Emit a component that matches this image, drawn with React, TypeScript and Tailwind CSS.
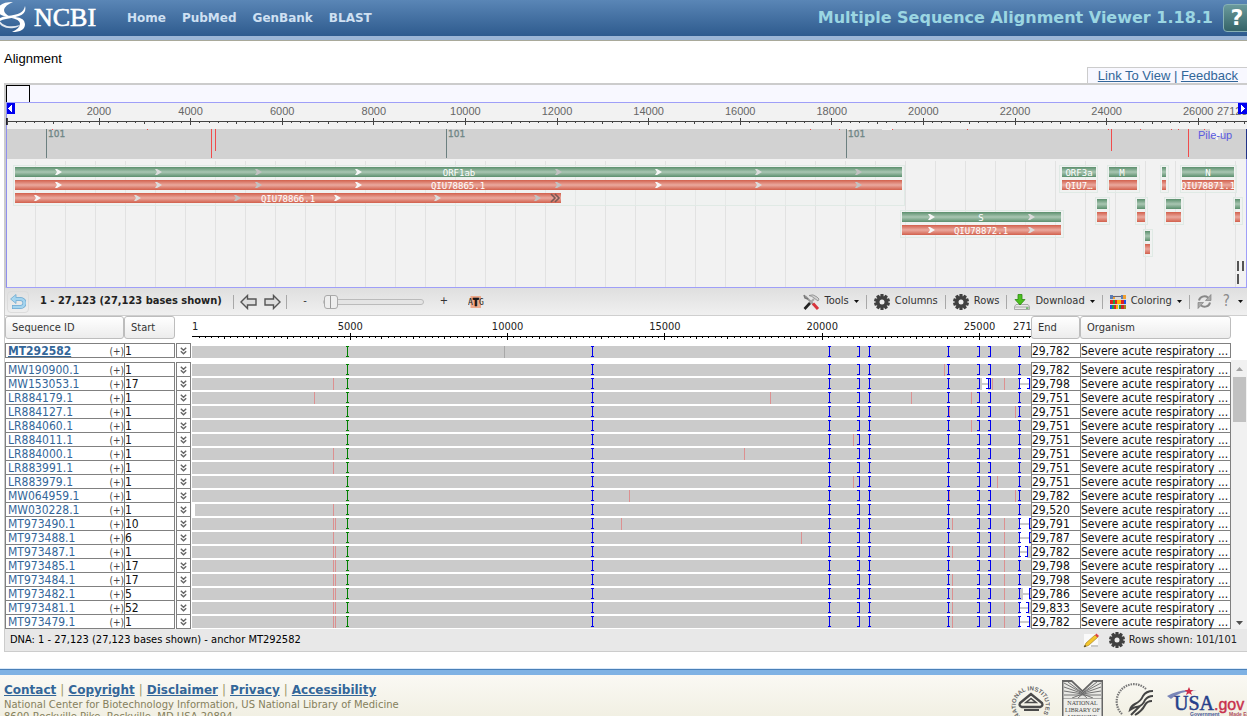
import React from "react";

const CONDENSED = "font-['DejaVu_Sans_Condensed','DejaVu_Sans',sans-serif]";

/* ---------- overview panel ---------- */

const OV_LEFT = 6;
const OV_WIDTH = 1241;
const ov = (x: number) => `${((x - OV_LEFT) / OV_WIDTH) * 100}%`;
const ovw = (w: number) => `${(w / OV_WIDTH) * 100}%`;

type Gene = { x1: number; x2: number; y: number; kind: "gene" | "protein"; label?: string; at?: number; arrows?: number[] };

const genes: Gene[] = [
  { x1: 15, x2: 902, y: 82, kind: "gene", label: "ORF1ab", at: 459, arrows: [55, 155, 255, 355, -1, 555, 655, 755, 855] },
  { x1: 15, x2: 902, y: 95, kind: "protein", label: "QIU78865.1", at: 458, arrows: [55, 155, 255, 355, -1, 555, 655, 755, 855] },
  { x1: 15, x2: 561, y: 108, kind: "protein", label: "QIU78866.1", at: 288, arrows: [34, 134, 234, 334, 434, 534] },
  { x1: 902, x2: 1061, y: 127, kind: "gene", label: "S", at: 981, arrows: [928, 1028] },
  { x1: 902, x2: 1061, y: 140, kind: "protein", label: "QIU78872.1", at: 981, arrows: [928, 1028] },
  { x1: 1062, x2: 1096, y: 82, kind: "gene", label: "ORF3a", at: 1079 },
  { x1: 1062, x2: 1096, y: 95, kind: "protein", label: "QIU7…", at: 1079 },
  { x1: 1109, x2: 1137, y: 82, kind: "gene", label: "M", at: 1122 },
  { x1: 1109, x2: 1137, y: 95, kind: "protein" },
  { x1: 1162, x2: 1166, y: 82, kind: "gene" },
  { x1: 1162, x2: 1166, y: 95, kind: "protein" },
  { x1: 1182, x2: 1234, y: 82, kind: "gene", label: "N", at: 1208 },
  { x1: 1182, x2: 1234, y: 95, kind: "protein", label: "QIU78871.1", at: 1208 },
  { x1: 1097, x2: 1107, y: 114, kind: "gene" },
  { x1: 1097, x2: 1107, y: 127, kind: "protein" },
  { x1: 1137, x2: 1145, y: 114, kind: "gene" },
  { x1: 1137, x2: 1145, y: 127, kind: "protein" },
  { x1: 1166, x2: 1181, y: 114, kind: "gene" },
  { x1: 1166, x2: 1181, y: 127, kind: "protein" },
  { x1: 1235, x2: 1240, y: 114, kind: "gene" },
  { x1: 1235, x2: 1240, y: 127, kind: "protein" },
  { x1: 1145, x2: 1150, y: 146, kind: "gene" },
  { x1: 1145, x2: 1150, y: 159, kind: "protein" },
];

const groupBoxes = [
  [13, 904, 80, 40], [901, 1063, 125, 27], [1060, 1098, 80, 27], [1107, 1139, 80, 27], [1160, 1168, 80, 27],
  [1180, 1236, 80, 27], [1095, 1109, 112, 27], [1135, 1147, 112, 27], [1164, 1183, 112, 27], [1233, 1242, 112, 27], [1143, 1152, 144, 27],
];

const arrowShades = ["#f6f6f6", "#dcdcdc", "#c2c2c2"];

function Overview() {
  const ticks = Array.from({ length: 136 }, (_, i) => i);
  const grid = Array.from({ length: 41 }, (_, i) => 35 + i * 30);
  return (
    <div className="ml-1 border-t-2 border-l-2 border-[#cccccc]">
      <svg className="block h-[203px] w-full overflow-hidden bg-[#f2f2f2]" role="img" aria-label="Alignment overview" shapeRendering="crispEdges">
        <defs>
          <linearGradient id="gene" x1="0" y1="0" x2="0" y2="1">
            <stop offset="0" stopColor="#5b8f6d" />
            <stop offset=".5" stopColor="#a9c6b2" />
            <stop offset="1" stopColor="#5b8f6d" />
          </linearGradient>
          <linearGradient id="protein" x1="0" y1="0" x2="0" y2="1">
            <stop offset="0" stopColor="#d2604c" />
            <stop offset=".5" stopColor="#eaa99e" />
            <stop offset="1" stopColor="#d2604c" />
          </linearGradient>
        </defs>

        <rect width="100%" height="17" fill="#f8f8ff" />
        <path d="M.5 17V.5h23V17" fill="none" stroke="#000" />
        <rect y="17" width="100%" height="1" fill="#9f9ff8" />

        {/* ruler */}
        <rect y="36" width="100%" height="1" fill="#444" />
        {ticks.map((i) => (
          <rect key={i} x={ov(7 + i * 9.16)} y={i % 10 === 0 ? 33 : 36} width="1" height={i % 10 === 0 ? 7 : i % 5 === 0 ? 3 : 2} fill="#444" />
        ))}
        <g fill="#666" fontSize="11" className="font-['Liberation_Sans',sans-serif]">
          {Array.from({ length: 13 }, (_, i) => (
            <text key={i} x={ov(99 + i * 91.6)} y="30" textAnchor="middle">{(i + 1) * 2000}</text>
          ))}
          <text x={ov(1217)} y="30">27123</text>
        </g>
        <rect y="18" width="9" height="11" fill="#0000f0" />
        <path d="M6 20v7L2 23.5z" fill="#fff" />
        <rect x={ov(1238)} y="18" width="9" height="11" fill="#0000f0" />
        <svg x={ov(1241)} y="20" overflow="visible"><path d="M0 0v7l4-3.5z" fill="#fff" /></svg>

        {/* pile-up */}
        <rect y="44" width="100%" height="30" fill="#d2d2d2" />
        {[850, 885, 1212].map((x, i) => (
          <svg key={x} x={ov(x)} y="44" overflow="visible"><path d={i === 2 ? "M-2 0H11v7H7l-2 5-4-5h-3z" : "M-3 0H7v1H-3z"} fill="#f2f2f2" /></svg>
        ))}
        {[46, 446, 846].map((x) => (
          <g key={x}>
            <rect x={ov(x)} y="44" width="1" height="29" fill="#6c8080" />
            <text x={ov(x + 2)} y="52" fontSize="9" fill="#708686" stroke="#708686" strokeWidth=".3" className="font-['DejaVu_Sans',sans-serif]">101</text>
          </g>
        ))}
        {[[211, 29], [215, 22], [1111, 22], [1188, 28]].map(([x, h]) => (
          <rect key={x} x={ov(x)} y="44" width="1" height={h} fill="#f04c4c" />
        ))}
        {[52, 147, 810, 839, 892, 967, 1108, 1140, 1171, 1178, 1204].map((x) => (
          <rect key={x} x={ov(x)} y="44" width="1" height="1" fill="#f04c4c" />
        ))}
        <text x={ov(1198)} y="54" fontSize="11" fill="#5a5ae0" className="font-['Liberation_Sans',sans-serif]">Pile-up</text>

        {/* gene track */}
        {grid.map((x) => <rect key={x} x={ov(x)} y="76" width="1" height="126" fill="#e2e2e2" />)}
        {groupBoxes.map(([a, b, y, h]) => (
          <rect key={`${a}-${y}`} x={ov(a)} y={y} width={ovw(b - a)} height={h} fill="#eef3f0" fillOpacity=".4" stroke="#e0eae5" />
        ))}
        {genes.map((g, i) => (
          <g key={i}>
            <rect x={ov(g.x1)} y={g.y} width={ovw(g.x2 - g.x1)} height="10" fill={g.kind === "gene" ? "url(#gene)" : "url(#protein)"} />
            {g.arrows?.map((x, k) => x > 0 && (
              <svg key={k} x={ov(x)} y={g.y + 2} overflow="visible" shapeRendering="auto">
                <path d="M0 0h2l5 3-5 3H0l2-3z" fill={arrowShades[k % 3]} />
              </svg>
            ))}
            {g.label && (
              <text x={ov(g.at!)} y={g.y + 9} fontSize="9" textAnchor="middle" fill="#fff" className="font-['DejaVu_Sans_Mono',monospace]">{g.label}</text>
            )}
          </g>
        ))}
        <svg x={ov(551)} y="109" overflow="visible" shapeRendering="auto">
          <path d="M0 0l4 4-4 4M4 0l4 4-4 4" fill="none" stroke="#7a5a55" strokeWidth="1.6" />
        </svg>
        {[[1237, 176], [1242, 176], [1237, 189]].map(([x, y]) => (
          <rect key={`${x}-${y}`} x={ov(x)} y={y} width="2" height="10" fill="#555" />
        ))}
        <rect y="17" width="1" height="186" fill="#8f8fee" />
        <rect y="33" width="1" height="7" fill="#223" />
        <rect x={ov(1246)} y="44" width="1" height="30" fill="#223388" />
        <rect x={ov(1246)} y="74" width="1" height="129" fill="#9f9ff8" />
        <rect y="202" width="100%" height="1" fill="#9f9ff8" />
      </svg>
    </div>
  );
}

/* ---------- toolbar ---------- */

const Gear = () => (
  <svg width="16" height="16" viewBox="0 0 16 16" aria-hidden="true">
    <g fill="#404040">
      {[0, 36, 72, 108, 144].map((a) => <rect key={a} x="6.4" y="0" width="3.2" height="16" rx=".6" transform={`rotate(${a} 8 8)`} />)}
      <circle cx="8" cy="8" r="6" />
    </g>
    <circle cx="8" cy="8" r="2.5" fill="#ececec" />
  </svg>
);

const Sep = () => <span className="h-3.5 w-px bg-[#a8a8a8]" />;
const Caret = () => <svg width="5" height="3" viewBox="0 0 5 3" aria-hidden="true"><path d="M0 0h5L2.5 3z" fill="#111" /></svg>;

function ArrowIcon({ flip }: { flip?: boolean }) {
  return (
    <svg width="17" height="16" viewBox="0 0 17 16" aria-hidden="true" className={flip ? "rotate-180" : ""}>
      <path d="M1 8l6.500-6.500V5H16v6H7.500v3.500z" fill="#ddd" stroke="#555" strokeWidth="1.400" />
    </svg>
  );
}

const toolBtn = "flex items-center gap-[5px]";

function Toolbar() {
  return (
    <div className={`flex h-7 items-center justify-between border-b border-[#cfcfcf] bg-gradient-to-b from-[#dfdfdf] to-[#f0f0f0] text-[11px] text-[#333] ${CONDENSED}`}>
      <div className="flex items-center">
        <button aria-label="Undo" className="ml-0.5 flex h-[22px] w-[22px] items-center justify-center rounded-sm border border-[#dcdcdc]">
          <svg width="16" height="16" viewBox="0 0 16 16" aria-hidden="true">
            <path d="M5 5h5.500a3.600 3.600 0 0 1 0 8H2" fill="none" stroke="#6fa9d0" strokeWidth="4" />
            <path d="M6 .5v9L.6 5z" fill="#a8d8f0" stroke="#6fa9d0" strokeWidth=".8" />
            <path d="M4 5h6.500a3.600 3.600 0 0 1 0 8H2.600" fill="none" stroke="#a4d4ee" strokeWidth="2.600" />
          </svg>
        </button>
        <span className="ml-[11px] w-[193px] font-bold whitespace-nowrap text-[#222]">1 - 27,123 (27,123 bases shown)</span>
        <Sep />
        <button aria-label="Pan left" className="ml-1.5"><ArrowIcon /></button>
        <button aria-label="Pan right" className="mr-[5px] ml-[7px]"><ArrowIcon flip /></button>
        <Sep />
        <button aria-label="Zoom out" className="ml-3 w-3">-</button>
        <input
          type="range"
          aria-label="Zoom level"
          defaultValue={0}
          className="mr-2 ml-3 h-4 w-[101px] appearance-none bg-transparent [&::-webkit-slider-runnable-track]:h-1.5 [&::-webkit-slider-runnable-track]:rounded-sm [&::-webkit-slider-runnable-track]:border [&::-webkit-slider-runnable-track]:border-[#bbb] [&::-webkit-slider-runnable-track]:bg-[#e4e4e4] [&::-webkit-slider-thumb]:-mt-[5px] [&::-webkit-slider-thumb]:h-3.5 [&::-webkit-slider-thumb]:w-3.5 [&::-webkit-slider-thumb]:appearance-none [&::-webkit-slider-thumb]:rounded-[3px] [&::-webkit-slider-thumb]:border [&::-webkit-slider-thumb]:border-[#aaa] [&::-webkit-slider-thumb]:bg-[linear-gradient(90deg,#eee_5px,#999_5px,#999_6px,#eee_6px)]"
        />
        <button aria-label="Zoom in" className="ml-1.5 w-3">+</button>
        <button aria-label="Zoom to sequence" className="ml-[18px]">
          <svg width="16" height="14" viewBox="0 0 16 14" aria-hidden="true">
            <rect x="2.500" y="1" width="10.500" height="12" fill="#eda98c" />
            <g className="font-['DejaVu_Sans_Mono',monospace]" fill="#222">
              <text x="0" y="10" fontSize="8">A</text>
              <text x="11" y="10" fontSize="8">G</text>
              <text x="4.500" y="11" fontSize="11" fontWeight="bold" stroke="#000" strokeWidth=".6">T</text>
            </g>
          </svg>
        </button>
      </div>
      <div className="flex items-center gap-[7px] whitespace-nowrap">
        <button className={toolBtn}>
          <svg width="17" height="16" viewBox="0 0 17 16" aria-hidden="true">
            <path d="M2 2l9 9" stroke="#999" strokeWidth="1.800" />
            <path d="M1 1l1 3 3 1" stroke="#777" fill="none" strokeWidth="1.500" />
            <path d="M10 9.500l5 5.500" stroke="#d8343c" strokeWidth="3" />
            <path d="M11 5L7 9" stroke="#aaa" strokeWidth="2" />
            <path d="M7 9l-5.500 6" stroke="#222" strokeWidth="2.600" />
            <path d="M6 1.500q4-2 8 1.500l2 2-1 2-4-3q-2-2-5-2.500z" fill="#d2d2d2" stroke="#888" strokeWidth=".8" />
          </svg>
          Tools <Caret />
        </button>
        <Sep />
        <button className={toolBtn}><Gear />Columns</button>
        <Sep />
        <button className={toolBtn}><Gear />Rows</button>
        <Sep />
        <button className={toolBtn}>
          <svg width="16" height="16" viewBox="0 0 16 16" aria-hidden="true">
            <path d="M2 10.500h12l1.500 2v3H.5v-3z" fill="#e8e8e8" stroke="#999" strokeWidth=".8" />
            <path d="M1 13h14" stroke="#aaa" />
            <rect x="12" y="13.500" width="2.500" height="1.200" fill="#4a4" />
            <path d="M4 .5h4v5h3L6 11 1 5.500h3z" fill="#4cc01e" stroke="#2c8a12" strokeWidth=".8" />
          </svg>
          Download <Caret />
        </button>
        <Sep />
        <button className={toolBtn}>
          <svg width="16" height="14" viewBox="0 0 16 14" shapeRendering="crispEdges" aria-hidden="true">
            <rect width="16" height="14" fill="#dcdcdc" />
            <path d="M0 0h3v4H0zM11 0h2v4h-2z" fill="#5c7cb4" />
            <path d="M3 1h8v1H3z" fill="#667" />
            <path d="M13 0h3v4h-3zM3 2h2v2H3z" fill="#f0a030" />
            <path d="M0 5h3v4H0zM5 5h2v4H5zM11 5h3v4h-3z" fill="#e02020" />
            <path d="M3 5h2v4H3zM9 10h2v4H9zM2 10h2v4H2z" fill="#20a040" />
            <path d="M7 5h4v4H7zM6 10h2v4H6z" fill="#ffb400" />
            <path d="M14 5h2v4h-2zM0 10h2v4H0z" fill="#2050e0" />
            <path d="M4 10h2v4H4zM11 10h3v4h-3z" fill="#d02828" />
            <path d="M14 10h2v4h-2z" fill="#a08a20" />
          </svg>
          Coloring <Caret />
        </button>
        <Sep />
        <button aria-label="Refresh">
          <svg width="15" height="15" viewBox="0 0 15 15" aria-hidden="true">
            <path d="M2 6.500A5.500 5 0 0 1 11 3.500M13 8.500A5.500 5 0 0 1 4 11.500" fill="none" stroke="#888" strokeWidth="2" />
            <path d="M14 .5v6H8.500zM1 14.500v-6h5.500z" fill="#aaa" stroke="#777" strokeWidth=".6" />
          </svg>
        </button>
        <button className="mr-1 flex items-center gap-2 text-[15px] leading-none text-[#8a8a8a]" aria-label="Help menu">
          <span className="ml-1">?</span> <Caret />
        </button>
      </div>
    </div>
  );
}

/* ---------- alignment table ---------- */

const AL_LEFT = 192;
const AL_WIDTH = 839;
const al = (x: number) => `${((x - AL_LEFT) / AL_WIDTH) * 100}%`;
const alw = (w: number) => `${(w / AL_WIDTH) * 100}%`;

type Gap = { from: number; to: number; close: "[" | "]" };
type Row = { id: string; start: number; end: string; marks?: number[]; gaps?: Gap[]; from?: number };

const rows: Row[] = [
  { id: "MW190900.1", start: 1, end: "29,782", marks: [944] },
  { id: "MW153053.1", start: 17, end: "29,798", marks: [333, 992, 1004], gaps: [{ from: 982, to: 988, close: "]" }, { from: 1020, to: 1029, close: "]" }] },
  { id: "LR884179.1", start: 1, end: "29,751", marks: [314, 770, 911, 971] },
  { id: "LR884127.1", start: 1, end: "29,751", marks: [949, 1015] },
  { id: "LR884060.1", start: 1, end: "29,751", marks: [971] },
  { id: "LR884011.1", start: 1, end: "29,751", marks: [853] },
  { id: "LR884000.1", start: 1, end: "29,751", marks: [333, 744] },
  { id: "LR883991.1", start: 1, end: "29,751", marks: [333] },
  { id: "LR883979.1", start: 1, end: "29,751", marks: [853, 997] },
  { id: "MW064959.1", start: 1, end: "29,782", marks: [629, 949, 1015] },
  { id: "MW030228.1", start: 1, end: "29,520", marks: [333], from: 195 },
  { id: "MT973490.1", start: 10, end: "29,791", marks: [333, 335, 621, 952, 1004], gaps: [{ from: 1020, to: 1029, close: "[" }] },
  { id: "MT973488.1", start: 6, end: "29,787", marks: [333, 801, 1004], gaps: [{ from: 1020, to: 1029, close: "[" }] },
  { id: "MT973487.1", start: 1, end: "29,782", marks: [333, 335, 952, 1004], gaps: [{ from: 1020, to: 1027, close: "]" }] },
  { id: "MT973485.1", start: 17, end: "29,798", marks: [333, 335, 1004] },
  { id: "MT973484.1", start: 17, end: "29,798", marks: [333, 335, 952, 1004] },
  { id: "MT973482.1", start: 5, end: "29,786", marks: [333, 335, 952, 1004], gaps: [{ from: 1023, to: 1029, close: "[" }] },
  { id: "MT973481.1", start: 52, end: "29,833", marks: [333, 335, 952, 1004], gaps: [{ from: 1020, to: 1028, close: "]" }] },
  { id: "MT973479.1", start: 1, end: "29,782", marks: [333, 335, 952, 1004], gaps: [{ from: 1020, to: 1029, close: "]" }] },
];

function Insert({ x, shape, color = "#0000f0" }: { x: number; shape: "I" | "[" | "]"; color?: string }) {
  const left = shape === "[" ? 0 : shape === "]" ? -2 : -1;
  return (
    <svg x={al(x)} overflow="visible" fill={color}>
      <rect width="1" height="11" />
      <rect x={left} width="3" height="1" />
      <rect x={left} y="10" width="3" height="1" />
    </svg>
  );
}

function Bar({ row, anchor }: { row?: Row; anchor?: boolean }) {
  const from = row?.from ?? AL_LEFT;
  return (
    <svg className={anchor ? "block h-[15px] w-full overflow-hidden" : "block h-3.5 w-full overflow-hidden"} shapeRendering="crispEdges" aria-hidden="true">
      <svg y={anchor ? 3 : 1} overflow="visible">
        <rect x={al(from)} width={alw(AL_LEFT + AL_WIDTH - from)} height="12" fill="#cbcbcb" />
        {anchor && <rect x={al(504)} width="1" height="12" fill="#a8a8a8" />}
        {row?.marks?.map((m) => <rect key={m} x={al(m)} width="1" height="12" fill="#dc9090" />)}
        {row?.gaps?.map((g) => (
          <g key={g.from}>
            <rect x={al(g.from)} width={alw(g.to - g.from)} height="12" fill="#fff" />
            <rect x={al(g.from)} y="5" width={alw(g.to - g.from)} height="2" fill="#cbcbcb" />
            <Insert x={g.to} shape={g.close} />
          </g>
        ))}
        <Insert x={347} shape="I" color="#008000" />
        {[592, 829, 869, 948, 1019].map((x) => <Insert key={x} x={x} shape="I" />)}
        {[859, 979, 990].map((x) => <Insert key={x} x={x} shape="]" />)}
      </svg>
    </svg>
  );
}

function Ruler() {
  return (
    <svg className="block h-[27px] w-full overflow-hidden" shapeRendering="crispEdges" role="img" aria-label="Sequence coordinates">
      <rect y="20" width="100%" height="1" fill="#000" />
      {Array.from({ length: 134 }, (_, i) => i + 1).map((i) => (
        <rect key={i} x={al(192.6 + i * 6.29)} y={i % 25 === 0 ? 17 : 20} width="1" height={i % 25 === 0 ? 7 : i % 5 === 0 ? 3 : 2} fill="#000" />
      ))}
      <g fill="#222" fontSize="11" className={CONDENSED}>
        <text x="0" y="14">1</text>
        {[1, 2, 3, 4, 5].map((i) => (
          <text key={i} x={al(193 + i * 157.3)} y="14" textAnchor="middle">{i * 5000}</text>
        ))}
        <text x={al(1013)} y="14">27123</text>
      </g>
    </svg>
  );
}

const headBtn = "block h-[23px] w-full rounded-[3px] border border-[#bdbdbd] bg-gradient-to-b from-white to-[#ececec] px-1.5 text-left text-[11px] leading-[21px] font-normal text-[#333]";
const cell = "border-b border-l border-[#808080] p-0";

function DataRow({ row, anchor }: { row: Row; anchor?: boolean }) {
  const top = anchor ? " border-t" : "";
  return (
    <tr className="leading-[15px]">
      <td className={cell + top}>
        <div className="flex h-[13px] justify-between pl-0.5">
          <a href="#" className={anchor ? "font-bold text-[#336699] underline" : "text-[#336699]"}>{row.id}</a>
          <span className="text-[10px] text-[#444]">(+)</span>
        </div>
      </td>
      <td className={cell + top + " border-r"}><div className="h-[13px]">{row.start}</div></td>
      <td className="px-px py-0">
        <button aria-label={`Expand ${row.id}`} className={"flex w-full items-center justify-center border-x border-b border-[#808080] " + (anchor ? "h-[15px] border-t" : "h-3.5")}>
          <svg width="7" height="8" viewBox="0 0 7 8" aria-hidden="true"><path d="M.8.8l2.700 2.400L6.200.8M.8 4.300l2.700 2.400 2.700-2.400" fill="none" stroke="#666" strokeWidth="1.500" /></svg>
        </button>
      </td>
      <td className="p-0"><Bar row={anchor ? undefined : row} anchor={anchor} /></td>
      <td className={cell + top}><div className="h-[13px]">{row.end}</div></td>
      <td className={cell + top + " border-r"}><div className="h-[13px] whitespace-nowrap">Severe acute respiratory ...</div></td>
    </tr>
  );
}

function AlignmentTable() {
  return (
    <div className="flex bg-white">
      <table className={`min-w-0 flex-1 table-fixed border-separate border-spacing-0 text-[12px] text-[#111] ${CONDENSED}`}>
        <colgroup>
          <col className="w-[119px]" />
          <col className="w-[51px]" />
          <col className="w-[17px]" />
          <col />
          <col className="w-[49px]" />
          <col className="w-[151px]" />
        </colgroup>
        <thead>
          <tr className="align-top">
            <th className="p-0"><button className={headBtn}>Sequence ID</button></th>
            <th className="p-0"><button className={headBtn}>Start</button></th>
            <th className="p-0" />
            <th className="p-0 font-normal"><Ruler /></th>
            <th className="p-0"><button className={headBtn}>End</button></th>
            <th className="p-0"><button className={headBtn}>Organism</button></th>
          </tr>
        </thead>
        <tbody>
          <DataRow anchor row={{ id: "MT292582", start: 1, end: "29,782" }} />
          <tr>
            <td className="h-[5px] border-b border-[#808080] p-0" />
            <td className="border-b border-[#808080] p-0" />
            <td className="px-px py-0"><div className="mt-1 h-px bg-[#808080]" /></td>
            <td className="p-0" />
            <td className="border-b border-[#808080] p-0" />
            <td className="border-b border-[#808080] p-0" />
          </tr>
          {rows.map((r) => <DataRow key={r.id} row={r} />)}
        </tbody>
      </table>
      <div className="mt-11 flex w-4 flex-col items-center justify-between bg-[#f1f1f1] pt-[7px] pb-1">
        <svg width="7" height="4" viewBox="0 0 7 4" aria-hidden="true"><path d="M0 4h7L3.500 0z" fill="#a3a3a3" /></svg>
        <div className="mt-1.5 mb-auto h-[45px] w-[13px] bg-[#c1c1c1]" />
        <svg width="7" height="4" viewBox="0 0 7 4" aria-hidden="true"><path d="M0 0h7L3.500 4z" fill="#505050" /></svg>
      </div>
    </div>
  );
}

/* ---------- footer marks ---------- */

const NihSeal = () => (
  <svg width="40" height="44" viewBox="0 0 40 44" role="img" aria-label="National Institutes of Health">
    <defs><path id="nihRing" d="M10 36A15 15 0 1 1 33 34" /></defs>
    <text fontSize="6" fontWeight="bold" fill="#666" className="font-['Liberation_Sans',sans-serif]"><textPath href="#nihRing">NATIONAL INSTITUTES</textPath></text>
    <path d="M21 14L10 23q-1.500 3 2 4h18q3.500-1 2-4z" fill="none" stroke="#4a4a4a" strokeWidth="2.400" />
    <path d="M21 18.500l-5 4h10z" fill="none" stroke="#4a4a4a" strokeWidth="1.600" />
    <path d="M14 30h15" stroke="#4a4a4a" strokeWidth="2" />
  </svg>
);

const NlmMark = () => (
  <svg width="41" height="44" viewBox="0 0 41 44" role="img" aria-label="National Library of Medicine">
    <path d="M0 0h10l10.500 10L31 0h10v44H0z" fill="#666" />
    <path d="M1.500 2h8l11 10.500L31.500 2h8v16h-38z" fill="#e8e8e4" />
    <g stroke="#666" strokeWidth=".9">
      <path d="M20.500 13L2 3M20.500 13.500L2 7M20.500 14L2 11M20.500 15L2 15M20.500 13L39 3M20.500 13.500L39 7M20.500 14L39 11M20.500 15L39 15M20.500 13L6 2M20.500 13L35 2M20.500 14L10 18M20.500 14L16 18M20.500 14L25 18M20.500 14L31 18" />
    </g>
    <path d="M1.500 18.500h38V44h-38z" fill="#eeeeea" />
    <g fill="#444" fontSize="6" textAnchor="middle" className="font-['Liberation_Serif',serif]">
      <text x="20.500" y="24.500">NATIONAL</text>
      <text x="20.500" y="31.500">LIBRARY OF</text>
      <text x="20.500" y="38.500">MEDICINE</text>
    </g>
  </svg>
);

const HhsMark = () => (
  <svg width="40" height="44" viewBox="0 0 40 44" role="img" aria-label="Department of Health and Human Services">
    <path d="M7 34A16 16 0 0 1 31 9" fill="none" stroke="#777" strokeWidth="2.200" strokeDasharray="1.500 1" />
    <path d="M38 11q-7 0-10 5-2 5-8 8-4 2-5 6 6-4 9-3l-8 8M38 16q-5 0-8 4-2 5-7 7M37 21q-5 0-7 4-3 6-10 10" fill="none" stroke="#444" strokeWidth="2" />
  </svg>
);

const UsaMark = () => (
  <svg width="80" height="44" viewBox="0 0 80 44" role="img" aria-label="USA.gov">
    <path d="M0 16q14-8 30-5Q14 10 4 19z" fill="#7a86b8" />
    <text x="7" y="30" fontSize="20" fill="#26408a" stroke="#26408a" strokeWidth=".5" className="font-['Liberation_Serif',serif]">USA</text>
    <path d="M22 7l1.300 3h3l-2.400 2 1 3-2.900-1.800L19 15l1-3-2.400-2h3z" fill="#d0304a" />
    <text x="47" y="30" fontSize="16" fill="#c8304c" stroke="#c8304c" strokeWidth=".4" className="font-['Liberation_Sans',sans-serif]">.gov</text>
    <text x="23" y="36" fontSize="5" fontWeight="bold" fill="#4a5a98" className="font-['Liberation_Sans',sans-serif]">Government</text>
    <text x="62" y="36" fontSize="5" fontWeight="bold" fill="#b05060" className="font-['Liberation_Sans',sans-serif]">Made Easy</text>
  </svg>
);

const footerLinks = ["Contact", "Copyright", "Disclaimer", "Privacy", "Accessibility"];

export default function App() {
  return (
    <div className="min-h-screen overflow-x-hidden bg-white font-['Liberation_Sans',Arial,sans-serif]">
      <header className="flex h-[41px] items-start justify-between border-b border-[#a9a99a] bg-[#9cb6d6] font-['DejaVu_Sans',Verdana,sans-serif]">
        <div className="flex h-9 w-full items-center justify-between bg-gradient-to-b from-[#5a86b6] to-[#2e5b8e]">
          <div className="flex items-center">
            <a href="#" aria-label="NCBI home" className="flex items-center">
              <svg width="28" height="32" viewBox="0 0 28 32" aria-hidden="true">
                <g fill="#fff">
                  <path d="M13 0Q1 0-2 6q-2 6 6 8 3 1 7 1-7-3-7-7 1-5 9-8z" />
                  <path d="M25 4q2 7-6 10-6 2-13 3-5 1-8 3v-3q3-2 9-3 9-1 13-3 4-2 5-7z" />
                  <path d="M12 30q13 0 13-8 0-6-10-7-3 0-5 .5 10 2 10 6 0 5-8 8.500z" />
                  <path d="M-1 18q3 5 8 6 6 1 13-1-1 2-6 3-7 1-12-2-3-2-3-6z" opacity=".85" />
                </g>
              </svg>
              <span className="ml-1.5 w-[93px] font-['Liberation_Serif',serif] text-[26px] leading-8 text-white [-webkit-text-stroke:0.6px_white]">NCBI</span>
            </a>
            <nav className="flex gap-4 text-[12px] font-bold text-[#cfe0f2]">
              {["Home", "PubMed", "GenBank", "BLAST"].map((t) => <a key={t} href="#">{t}</a>)}
            </nav>
          </div>
          <div className="flex items-center">
            <h1 className="text-[16px] font-bold whitespace-nowrap text-[#9bd6e2]">Multiple Sequence Alignment Viewer 1.18.1</h1>
            <button aria-label="Help" className="-mr-1 ml-2.5 h-7 w-7 rounded border border-[#86b0b4] bg-gradient-to-b from-[#6a9a9c] to-[#356468] text-[22px] leading-6 font-bold text-white">?</button>
          </div>
        </div>
      </header>

      <main>
        <div className="flex items-end justify-between pl-1">
          <h2 className="pt-2.5 pb-4 text-[13px] leading-4 text-black">Alignment</h2>
          <div className="border-t border-l border-[#cccccc] bg-[#f8f8ff] pr-[9px] pl-2.5 text-[13px] leading-[15px] text-[#336699]">
            <a href="#" className="underline">Link To View</a> | <a href="#" className="underline">Feedback</a>
          </div>
        </div>
        <Overview />
        <div className="ml-1 border-b border-l border-[#cccccc]">
          <Toolbar />
          <AlignmentTable />
          <div className={`flex h-[22px] items-center justify-between bg-[#e8e8e8] pr-2.5 pl-[5px] text-[11px] text-black ${CONDENSED}`}>
            <span>DNA: 1 - 27,123 (27,123 bases shown) - anchor MT292582</span>
            <div className="flex items-center text-[#222]">
              <svg width="16" height="15" viewBox="0 0 16 15" className="mr-2.5" aria-hidden="true">
                <path d="M1 1h14v13H1z" fill="#fafafa" />
                <path d="M1 14l2-4 9-8 2.500 2.500-9 8z" fill="#f4c62c" stroke="#a8842a" strokeWidth=".7" />
                <path d="M12 2l1.500-1.500L16 3l-1.500 1.500z" fill="#d44" />
                <path d="M1 14l1-2 1.200 1.200z" fill="#222" />
                <path d="M8 13h7" stroke="#999" />
              </svg>
              <Gear />
              <span className="ml-1">Rows shown: 101/101</span>
            </div>
          </div>
        </div>
      </main>

      <footer className="mt-4 border-t border-[#dbeafa] font-['DejaVu_Sans',Verdana,sans-serif]">
        <div className="h-[6px] border-t border-[#4a80b8] bg-[#7fb2e4]" />
        <div className="flex justify-between bg-gradient-to-b from-[#faf9f4] to-[#f0eee0] pl-1">
          <div className="pt-1.5">
            <nav className="flex gap-1 text-[12px] leading-[18px] text-[#a09a68]">
              {footerLinks.map((t, i) => (
                <React.Fragment key={t}>
                  {i > 0 && <span>|</span>}
                  <a href="#" className="font-bold text-[#336699] underline">{t}</a>
                </React.Fragment>
              ))}
            </nav>
            <address className="text-[10px] leading-3 text-[#85805c] not-italic">
              National Center for Biotechnology Information, US National Library of Medicine
              <br />
              8600 Rockville Pike, Rockville, MD USA 20894
            </address>
          </div>
          <div className="flex h-[42px] items-start gap-3 overflow-hidden pt-[5px]">
            <NihSeal />
            <NlmMark />
            <HhsMark />
            <UsaMark />
          </div>
        </div>
      </footer>
    </div>
  );
}
